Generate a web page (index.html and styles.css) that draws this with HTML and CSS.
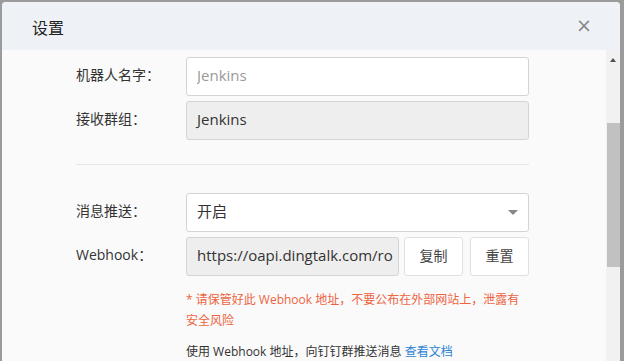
FILE: index.html
```html
<!DOCTYPE html>
<html lang="zh-CN">
<head>
    <meta charset="UTF-8">
    <title>设置</title>
    <link rel="stylesheet" href="styles.css">
</head>
<body>
    <div class="dialog">
        <div class="dialog-header">
            <span class="dialog-title">设置</span>
            <span class="dialog-close">&times;</span>
        </div>
        <div class="dialog-body">
            <div class="dialog-content">
                <div class="form-row">
                    <label>机器人名字：</label>
                    <input class="field" type="text" placeholder="Jenkins">
                </div>
                <div class="form-row">
                    <label>接收群组：</label>
                    <div class="field field-disabled">Jenkins</div>
                </div>

                <div class="divider"></div>

                <div class="form-row">
                    <label>消息推送：</label>
                    <div class="field select">
                        <span>开启</span>
                        <span class="caret"></span>
                    </div>
                </div>
                <div class="form-row">
                    <label>Webhook：</label>
                    <div class="field field-disabled webhook">https://oapi.dingtalk.com/ro</div>
                    <button class="btn">复制</button>
                    <button class="btn">重置</button>
                </div>
                <div class="form-tip">
                    <p class="warn">* 请保管好此 Webhook 地址，不要公布在外部网站上，泄露有安全风险</p>
                    <p class="help">使用 Webhook 地址，向钉钉群推送消息 <a href="#">查看文档</a></p>
                </div>
            </div>
            <div class="scrollbar">
                <span class="scroll-arrow"></span>
                <div class="scroll-thumb"></div>
            </div>
        </div>
    </div>
</body>
</html>
```

FILE: styles.css
```css
body {
    margin: 0;
    padding: 2px 4px 0 2px;
    background-color: #9b9b9b;
    font-family: 'Open Sans', 'Noto Sans CJK SC', sans-serif;
    height: 361px;
    box-sizing: border-box;
    overflow: hidden;
}

.dialog {
    height: 100%;
    display: flex;
    flex-direction: column;
    background: #fafafa;
    border-radius: 4px 4px 0 0;
    overflow: hidden;
}

.dialog-header {
    height: 48px;
    flex-shrink: 0;
    background: #eef2f6;
    display: flex;
    align-items: center;
    justify-content: space-between;
    padding: 0 28px 0 30px;
}

.dialog-title {
    font-size: 16px;
    color: #222;
    margin-top: 2px;
}

.dialog-close {
    font-family: 'DejaVu Sans', sans-serif;
    font-size: 19px;
    color: #888;
    margin-top: -2px;
}

.dialog-body {
    flex: 1;
    display: flex;
    min-height: 0;
}

.dialog-content {
    flex: 1;
    padding: 7px 77px 0 74px;
}

.form-row {
    display: flex;
    align-items: center;
    gap: 5px;
    margin-bottom: 5px;
}

.form-row label {
    width: 105px;
    flex-shrink: 0;
    font-size: 14px;
    color: #333;
    margin-bottom: 5px;
}

.field {
    flex: 1;
    height: 39px;
    box-sizing: border-box;
    border: 1px solid #d4d4d4;
    border-radius: 3px;
    background: #fff;
    padding: 0 10px 4px;
    font-family: inherit;
    font-size: 15px;
    color: #333;
    outline: none;
    display: flex;
    align-items: center;
    min-width: 0;
}

.field::placeholder {
    color: #9a9a9a;
}

.field-disabled {
    background: #eeeeee;
    color: #333;
}

.webhook {
    white-space: nowrap;
    overflow: hidden;
    flex: 0 0 213px;
}

.select {
    justify-content: space-between;
    padding-right: 10px;
}

.caret {
    width: 0;
    height: 0;
    margin-top: 4px;
    border-left: 5px solid transparent;
    border-right: 5px solid transparent;
    border-top: 5px solid #888;
}

.btn {
    width: 59px;
    height: 39px;
    flex-shrink: 0;
    border: 1px solid #e0e0e0;
    border-radius: 3px;
    background: #fff;
    font-family: inherit;
    font-size: 14px;
    color: #444;
    padding: 0 0 4px;
}

.btn + .btn {
    margin-left: 2px;
}

.divider {
    height: 1px;
    background: #e6e6e6;
    margin: 24px 0 28px;
}

.form-tip {
    padding-left: 110px;
    padding-top: 8px;
}

.form-tip p {
    margin: 0;
    font-size: 12px;
    line-height: 21px;
}

.warn {
    color: #ee6441;
    margin-bottom: 10px !important;
}

.help {
    color: #333;
}

.help a {
    color: #2c83d2;
    text-decoration: none;
}

.scrollbar {
    width: 15px;
    flex-shrink: 0;
    background: #f1f1f1;
    position: relative;
}

.scroll-arrow {
    position: absolute;
    top: 8px;
    left: 4px;
    width: 0;
    height: 0;
    border-left: 3px solid transparent;
    border-right: 3px solid transparent;
    border-bottom: 4px solid #505050;
}

.scroll-thumb {
    position: absolute;
    top: 73px;
    left: 1px;
    width: 13px;
    height: 144px;
    background: #c1c1c1;
}
```
